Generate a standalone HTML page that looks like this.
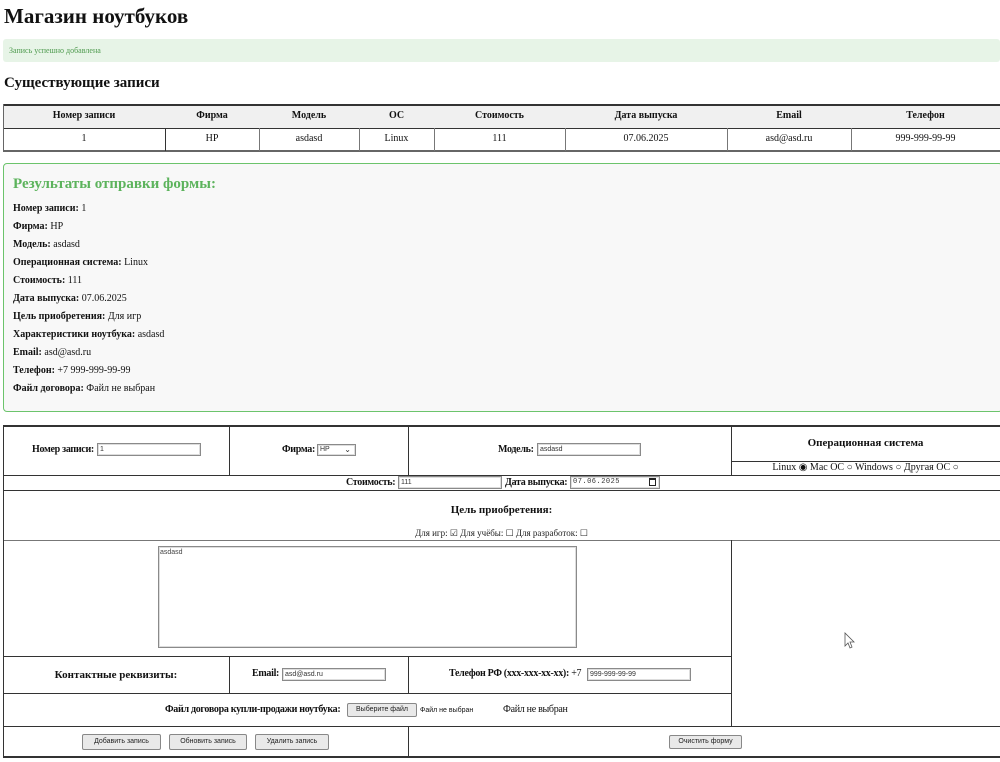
<!DOCTYPE html>
<html><head><meta charset="utf-8">
<style>
*{box-sizing:border-box;margin:0;padding:0}
body{width:1000px;height:762px;overflow:hidden;background:#fff;font-family:"Liberation Serif","DejaVu Serif",serif;color:#111;position:relative}
.a{position:absolute}
.t{position:absolute;white-space:nowrap;font-size:10px;line-height:12px}
.c{text-align:center}
b{font-weight:bold}
.lb{letter-spacing:-0.3px}
.in{position:absolute;border:1px solid #8a8a8a;background:#fff;font-family:"Liberation Sans",sans-serif;font-size:7px;line-height:11px;padding-left:2px;color:#333;height:13px;box-shadow:inset 0 0 0 1px #ddd}
.btn{position:absolute;border:1px solid #888;background:#e9e9e9;font-family:"Liberation Sans",sans-serif;font-size:7px;line-height:14px;text-align:center;height:16px;color:#222;border-radius:2px}
.hl{position:absolute;height:1px;background:#333}
.vl{position:absolute;width:1px;background:#333}
.gl{position:absolute;width:1px;background:#777}
.ghl{position:absolute;height:1px;background:#888}
</style></head><body>
<div class="t" style="left:4px;top:4px;font-size:21px;line-height:24px;font-weight:bold">Магазин ноутбуков</div>
<div class="a" style="left:3px;top:39px;width:997px;height:23px;background:#e7f4e7;border-radius:3px"></div>
<div class="t" style="left:9px;top:45px;font-size:8px;color:#4e9a4e">Запись успешно добавлена</div>
<div class="t" style="left:4px;top:75px;font-size:15px;line-height:17px;font-weight:bold">Существующие записи</div>

<div class="a" style="left:3px;top:104px;width:997px;height:24px;background:#f0f0f0"></div>
<div class="hl" style="left:3px;top:104px;width:997px;height:2px"></div>
<div class="ghl" style="left:3px;top:128px;width:997px;background:#333"></div>
<div class="hl" style="left:3px;top:150px;width:997px;height:2px;background:#666"></div>
<div class="vl" style="left:3px;top:104px;height:48px;background:#666"></div>
<div class="gl" style="left:165px;top:128px;height:23px;background:#333"></div>
<div class="gl" style="left:259px;top:128px;height:23px"></div>
<div class="gl" style="left:359px;top:128px;height:23px"></div>
<div class="gl" style="left:434px;top:128px;height:23px"></div>
<div class="gl" style="left:565px;top:128px;height:23px"></div>
<div class="gl" style="left:727px;top:128px;height:23px"></div>
<div class="gl" style="left:851px;top:128px;height:23px"></div>
<div class="t c" style="left:3px;top:110px;width:162px;font-weight:bold">Номер записи</div>
<div class="t c" style="left:165px;top:110px;width:94px;font-weight:bold">Фирма</div>
<div class="t c" style="left:259px;top:110px;width:100px;font-weight:bold">Модель</div>
<div class="t c" style="left:359px;top:110px;width:75px;font-weight:bold">ОС</div>
<div class="t c" style="left:434px;top:110px;width:131px;font-weight:bold">Стоимость</div>
<div class="t c" style="left:565px;top:110px;width:162px;font-weight:bold">Дата выпуска</div>
<div class="t c" style="left:727px;top:110px;width:124px;font-weight:bold">Email</div>
<div class="t c" style="left:851px;top:110px;width:149px;font-weight:bold">Телефон</div>
<div class="t c" style="left:3px;top:133px;width:162px">1</div>
<div class="t c" style="left:165px;top:133px;width:94px">HP</div>
<div class="t c" style="left:259px;top:133px;width:100px">asdasd</div>
<div class="t c" style="left:359px;top:133px;width:75px">Linux</div>
<div class="t c" style="left:434px;top:133px;width:131px">111</div>
<div class="t c" style="left:565px;top:133px;width:162px">07.06.2025</div>
<div class="t c" style="left:727px;top:133px;width:124px">asd@asd.ru</div>
<div class="t c" style="left:851px;top:133px;width:149px">999-999-99-99</div>

<div class="a" style="left:3px;top:163px;width:1000px;height:249px;background:#f8f8f8;border:1px solid #6cc46c;border-radius:4px"></div>
<div class="t" style="left:13px;top:175px;font-size:15px;line-height:18px;font-weight:bold;color:#5cb35c">Результаты отправки формы:</div>
<div class="t" style="left:13px;top:203px"><b>Номер записи:</b> 1</div>
<div class="t" style="left:13px;top:221px"><b>Фирма:</b> HP</div>
<div class="t" style="left:13px;top:239px"><b>Модель:</b> asdasd</div>
<div class="t" style="left:13px;top:257px"><b>Операционная система:</b> Linux</div>
<div class="t" style="left:13px;top:275px"><b>Стоимость:</b> 111</div>
<div class="t" style="left:13px;top:293px"><b>Дата выпуска:</b> 07.06.2025</div>
<div class="t" style="left:13px;top:311px"><b>Цель приобретения:</b> Для игр</div>
<div class="t" style="left:13px;top:329px"><b>Характеристики ноутбука:</b> asdasd</div>
<div class="t" style="left:13px;top:347px"><b>Email:</b> asd@asd.ru</div>
<div class="t" style="left:13px;top:365px"><b>Телефон:</b> +7 999-999-99-99</div>
<div class="t" style="left:13px;top:383px"><b>Файл договора:</b> Файл не выбран</div>

<div class="hl" style="left:3px;top:425px;width:997px;height:2px"></div>
<div class="hl" style="left:731px;top:461px;width:269px"></div>
<div class="hl" style="left:3px;top:475px;width:997px"></div>
<div class="hl" style="left:3px;top:490px;width:997px"></div>
<div class="hl" style="left:3px;top:540px;width:997px;background:#777"></div>
<div class="hl" style="left:3px;top:656px;width:728px"></div>
<div class="hl" style="left:3px;top:693px;width:728px"></div>
<div class="hl" style="left:3px;top:726px;width:997px"></div>
<div class="hl" style="left:3px;top:756px;width:997px;height:2px"></div>
<div class="vl" style="left:3px;top:425px;height:333px"></div>
<div class="vl" style="left:229px;top:425px;height:50px"></div>
<div class="vl" style="left:408px;top:425px;height:50px"></div>
<div class="vl" style="left:731px;top:425px;height:50px"></div>
<div class="vl" style="left:731px;top:540px;height:186px"></div>
<div class="vl" style="left:229px;top:656px;height:37px"></div>
<div class="vl" style="left:408px;top:656px;height:37px"></div>
<div class="vl" style="left:408px;top:726px;height:31px"></div>

<div class="t lb" style="left:32px;top:444px"><b>Номер записи:</b></div>
<div class="in" style="left:97px;top:443px;width:104px">1</div>
<div class="t lb" style="left:282px;top:444px"><b>Фирма:</b></div>
<div class="in" style="left:317px;top:444px;width:39px;height:12px;line-height:10px">HP<span style="position:absolute;right:4px;top:0;font-size:8px">&#8964;</span></div>
<div class="t lb" style="left:498px;top:444px"><b>Модель:</b></div>
<div class="in" style="left:537px;top:443px;width:104px">asdasd</div>
<div class="t c" style="left:731px;top:437px;width:269px;font-size:11px;font-weight:bold">Операционная система</div>
<div class="t c" style="left:731px;top:462px;width:269px;font-size:10px">Linux ◉ Mac OC ○ Windows ○ Другая OC ○</div>

<div class="t lb" style="left:346px;top:477px"><b>Стоимость:</b></div>
<div class="in" style="left:398px;top:476px;width:104px">111</div>
<div class="t lb" style="left:505px;top:477px"><b>Дата выпуска:</b></div>
<div class="in" style="left:570px;top:476px;width:90px;letter-spacing:0.5px;font-family:'Liberation Mono',monospace;font-size:7px">07.06.2025<span style="position:absolute;right:3px;top:1px;width:7px;height:8px;border:1px solid #222;border-top-width:2px"></span></div>

<div class="t c" style="left:3px;top:504px;width:997px;font-size:11px;font-weight:bold">Цель приобретения:</div>
<div class="t c" style="left:3px;top:527px;width:997px;font-size:9px;color:#222">Для игр: ☑ Для учёбы: ☐ Для разработок: ☐</div>

<div class="a" style="left:158px;top:546px;width:419px;height:102px;border:1px solid #8a8a8a;box-shadow:inset 0 0 0 1px #ddd"></div>
<div class="t" style="left:160px;top:547px;font-family:'Liberation Sans',sans-serif;font-size:7px;color:#444">asdasd</div>
<svg class="a" style="left:844px;top:632px" width="12" height="18" viewBox="0 0 12 18"><path d="M1 1 L1 14 L4 11 L6 16 L8 15 L6 10 L10 10 Z" fill="#fff" stroke="#555" stroke-width="0.8"/></svg>

<div class="t c" style="left:3px;top:669px;width:226px;font-size:11px;font-weight:bold">Контактные реквизиты:</div>
<div class="t lb" style="left:252px;top:668px"><b>Email:</b></div>
<div class="in" style="left:282px;top:668px;width:104px">asd@asd.ru</div>
<div class="t lb" style="left:449px;top:668px"><b>Телефон РФ (xxx-xxx-xx-xx):</b> +7</div>
<div class="in" style="left:587px;top:668px;width:104px">999-999-99-99</div>

<div class="t lb" style="left:165px;top:704px"><b>Файл договора купли-продажи ноутбука:</b></div>
<div class="btn" style="left:347px;top:703px;width:70px;height:14px;line-height:12px">Выберите файл</div>
<div class="t" style="left:420px;top:705px;font-family:'Liberation Sans',sans-serif;font-size:7px">Файл не выбран</div>
<div class="t lb" style="left:503px;top:704px">Файл не выбран</div>

<div class="btn" style="left:82px;top:734px;width:79px">Добавить запись</div>
<div class="btn" style="left:169px;top:734px;width:78px">Обновить запись</div>
<div class="btn" style="left:255px;top:734px;width:74px">Удалить запись</div>
<div class="btn" style="left:669px;top:735px;width:73px;height:14px;line-height:12px">Очистить форму</div>
</body></html>
